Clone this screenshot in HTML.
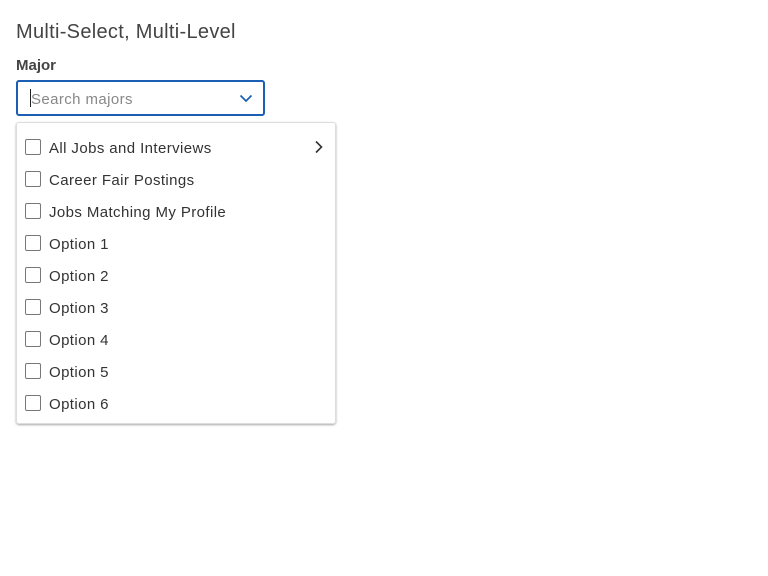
<!DOCTYPE html>
<html><head><style>
body{margin:0;width:768px;height:576px;background:#fff;font-family:"Liberation Sans",sans-serif;color:#333;position:relative}
.t{position:absolute;left:16px;top:21px;font-size:20px;color:#444;letter-spacing:0.3px}
.l{position:absolute;left:16px;top:57px;font-size:15px;font-weight:bold;color:#444}
.in{position:absolute;left:16px;top:80px;width:245px;height:32px;border:2px solid #1a5fb4;border-radius:3px}
.in .c{position:absolute;left:12px;top:7px;width:1px;height:18px;background:#222}
.in .p{position:absolute;left:13px;top:9px;font-size:15px;color:#888;letter-spacing:0.4px}
.in svg{position:absolute;right:10px;top:11px}
.dd{position:absolute;left:16px;top:122px;width:318px;height:300px;border:1px solid #ddd;border-radius:3px;box-shadow:0 1px 2px rgba(0,0,0,.35)}
.r{position:absolute;left:0;height:32px;width:100%}
.r i{position:absolute;left:8px;top:7px;width:14px;height:14px;border:1px solid #777;border-radius:2px}
.r span{position:absolute;left:32px;top:8px;font-size:15px;color:#333;letter-spacing:0.4px}
.r svg{position:absolute;right:12px;top:8px}
</style></head><body>
<div class="t">Multi-Select, Multi-Level</div>
<div class="l">Major</div>
<div class="in"><div class="c"></div><div class="p">Search majors</div>
<svg width="14" height="10" viewBox="0 0 14 10"><path d="M1.5 2.5L7 8L12.5 2.5" fill="none" stroke="#1a5fb4" stroke-width="1.7"/></svg></div>
<div class="dd">
<div class="r" style="top:9px"><i></i><span>All Jobs and Interviews</span><svg width="10" height="14" viewBox="0 0 10 14"><path d="M3 1.5L8.5 7L3 12.5" fill="none" stroke="#333" stroke-width="1.6"/></svg></div>
<div class="r" style="top:41px"><i></i><span>Career Fair Postings</span></div>
<div class="r" style="top:73px"><i></i><span>Jobs Matching My Profile</span></div>
<div class="r" style="top:105px"><i></i><span>Option 1</span></div>
<div class="r" style="top:137px"><i></i><span>Option 2</span></div>
<div class="r" style="top:169px"><i></i><span>Option 3</span></div>
<div class="r" style="top:201px"><i></i><span>Option 4</span></div>
<div class="r" style="top:233px"><i></i><span>Option 5</span></div>
<div class="r" style="top:265px"><i></i><span>Option 6</span></div>
</div>
</body></html>
